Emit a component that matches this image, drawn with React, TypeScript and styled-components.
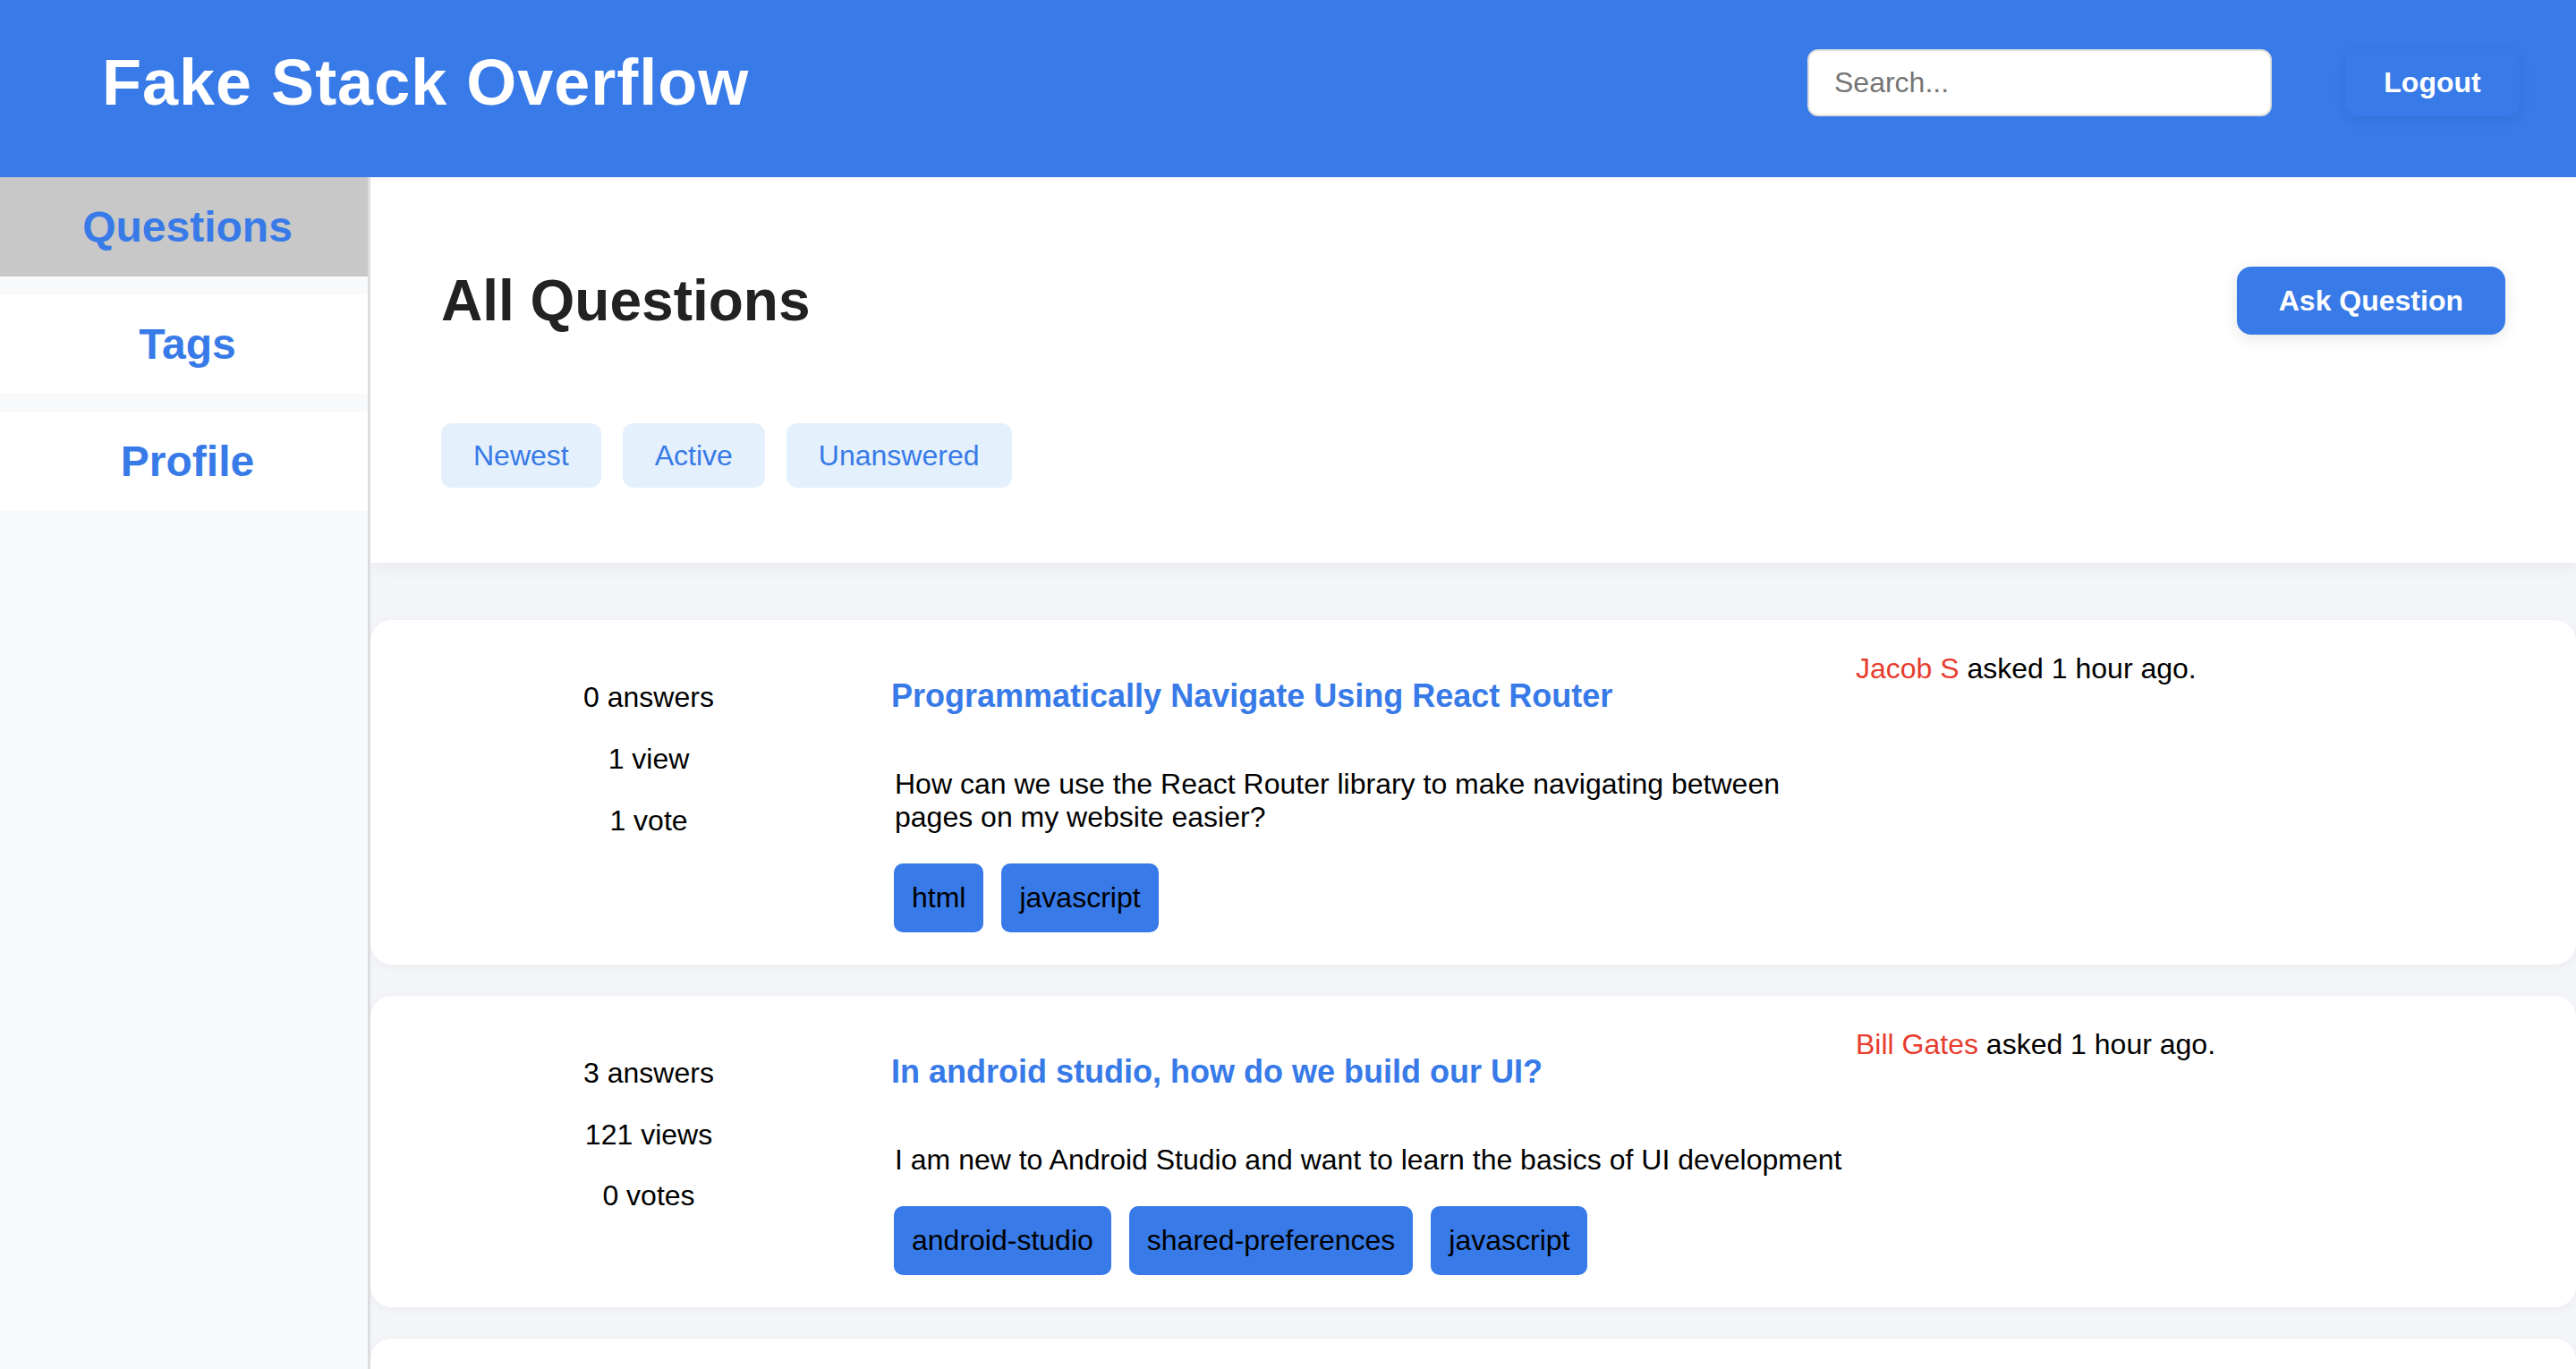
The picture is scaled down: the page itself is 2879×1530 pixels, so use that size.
import React from "react";
import styled, { createGlobalStyle } from "styled-components";

const BLUE = "#377ae8";

const GlobalStyle = createGlobalStyle`
  html, body {
    margin: 0;
    padding: 0;
    overflow: hidden;
    font-family: "Liberation Sans", Arial, sans-serif;
    background: #f4f5f9;
  }
  * { box-sizing: border-box; }
`;

const Page = styled.div`
  display: flex;
  flex-direction: column;
  height: 100vh;
`;

const TopBar = styled.header`
  display: flex;
  align-items: center;
  justify-content: space-between;
  height: 198px;
  flex-shrink: 0;
  padding: 0 63px 14px 114px;
  background: ${BLUE};
`;

const Brand = styled.h1`
  margin: 0;
  font-size: 72px;
  font-weight: 700;
  letter-spacing: 1px;
  color: #fff;
`;

const TopActions = styled.div`
  display: flex;
  align-items: center;
  gap: 82px;
`;

const SearchInput = styled.input`
  width: 519px;
  height: 75px;
  border: 2px solid #dedede;
  border-radius: 12px;
  padding: 0 28px;
  font-family: "Liberation Sans", Arial, sans-serif;
  font-size: 32px;
  color: #222;
  background: #fff;
  outline: none;
  &::placeholder {
    color: #757575;
  }
`;

const LogoutButton = styled.button`
  width: 195px;
  height: 76px;
  border: none;
  border-radius: 16px;
  background: ${BLUE};
  color: #fff;
  font-family: "Liberation Sans", Arial, sans-serif;
  font-size: 32px;
  font-weight: 700;
  box-shadow: 0 4px 14px rgba(0, 0, 0, 0.08);
  cursor: pointer;
`;

const Body = styled.div`
  display: flex;
  flex: 1;
  min-height: 0;
`;

const Sidebar = styled.nav`
  width: 414px;
  flex-shrink: 0;
  display: flex;
  flex-direction: column;
  gap: 20px;
  background: #f8f9fb;
  border-right: 3px solid #dcdde1;
`;

const NavItem = styled.a<{ $active?: boolean }>`
  display: flex;
  align-items: center;
  justify-content: center;
  height: 111px;
  padding-left: 8px;
  background: ${(p) => (p.$active ? "#c8c8c8" : "#ffffff")};
  color: ${BLUE};
  font-size: 48px;
  font-weight: 700;
  text-decoration: none;
  cursor: pointer;
`;

const Main = styled.main`
  flex: 1;
  min-width: 0;
  overflow: hidden;
  background: #f4f5f9;
`;

const ListHeader = styled.section`
  background: #fff;
  padding: 100px 79px 84px 79px;
  box-shadow: 0 6px 18px rgba(0, 0, 0, 0.05);
  position: relative;
  z-index: 1;
`;

const HeaderRow = styled.div`
  display: flex;
  align-items: center;
  justify-content: space-between;
  height: 76px;
`;

const PageTitle = styled.h2`
  margin: 0;
  font-size: 64px;
  font-weight: 700;
  color: #222;
`;

const AskButton = styled.button`
  height: 76px;
  padding: 0 47px;
  border: none;
  border-radius: 16px;
  background: ${BLUE};
  color: #fff;
  font-family: "Liberation Sans", Arial, sans-serif;
  font-size: 32px;
  font-weight: 700;
  box-shadow: 0 4px 18px rgba(0, 0, 0, 0.1);
  cursor: pointer;
`;

const FilterRow = styled.div`
  display: flex;
  gap: 24px;
  margin-top: 99px;
`;

const FilterButton = styled.button`
  height: 72px;
  padding: 0 36px;
  border: none;
  border-radius: 12px;
  background: #e4f0fb;
  color: ${BLUE};
  font-family: "Liberation Sans", Arial, sans-serif;
  font-size: 32px;
  cursor: pointer;
`;

const QuestionList = styled.div`
  display: flex;
  flex-direction: column;
  gap: 35px;
  padding-top: 64px;
`;

const Card = styled.article<{ $placeholder?: boolean }>`
  display: flex;
  align-items: flex-start;
  min-height: ${(p) => (p.$placeholder ? "349px" : "0")};
  padding: 36px;
  background: #fff;
  border-radius: 24px;
  box-shadow: 0 2px 12px rgba(0, 0, 0, 0.04);
`;

const Stats = styled.div`
  width: 550px;
  flex-shrink: 0;
  display: flex;
  flex-direction: column;
  align-items: center;
  gap: 32px;
  padding-top: 32px;
  font-size: 32px;
  color: #000;
`;

const Stat = styled.div`
  line-height: 36.8px;
`;

const Content = styled.div`
  width: 1074px;
  flex-shrink: 0;
  padding-top: 28px;
`;

const QuestionTitle = styled.h3`
  margin: 0 0 60px -4px;
  font-size: 36px;
  font-weight: 700;
  color: ${BLUE};
  line-height: 41.4px;
  cursor: pointer;
`;

const Description = styled.p`
  margin: 0 0 33px;
  font-size: 32px;
  line-height: 36.8px;
  color: #000;
`;

const Tags = styled.div`
  display: flex;
  gap: 20px;
  margin-left: -1px;
`;

const Tag = styled.span`
  padding: 20px;
  border-radius: 10px;
  background: ${BLUE};
  color: #000;
  font-size: 32px;
  line-height: 36.8px;
`;

const Meta = styled.div`
  font-size: 32px;
  line-height: 36.8px;
  color: #000;
`;

const Author = styled.span`
  color: #e73c2e;
`;

type Question = {
  answers: string;
  views: string;
  votes: string;
  title: string;
  text: string;
  tags: string[];
  author: string;
};

const questions: Question[] = [
  {
    answers: "0 answers",
    views: "1 view",
    votes: "1 vote",
    title: "Programmatically Navigate Using React Router",
    text: "How can we use the React Router library to make navigating between pages on my website easier?",
    tags: ["html", "javascript"],
    author: "Jacob S",
  },
  {
    answers: "3 answers",
    views: "121 views",
    votes: "0 votes",
    title: "In android studio, how do we build our UI?",
    text: "I am new to Android Studio and want to learn the basics of UI development",
    tags: ["android-studio", "shared-preferences", "javascript"],
    author: "Bill Gates",
  },
];

export default function App() {
  return (
    <>
      <GlobalStyle />
      <Page>
        <TopBar>
          <Brand>Fake Stack Overflow</Brand>
          <TopActions>
            <SearchInput placeholder="Search..." />
            <LogoutButton>Logout</LogoutButton>
          </TopActions>
        </TopBar>
        <Body>
          <Sidebar>
            <NavItem $active>Questions</NavItem>
            <NavItem>Tags</NavItem>
            <NavItem>Profile</NavItem>
          </Sidebar>
          <Main>
            <ListHeader>
              <HeaderRow>
                <PageTitle>All Questions</PageTitle>
                <AskButton>Ask Question</AskButton>
              </HeaderRow>
              <FilterRow>
                <FilterButton>Newest</FilterButton>
                <FilterButton>Active</FilterButton>
                <FilterButton>Unanswered</FilterButton>
              </FilterRow>
            </ListHeader>
            <QuestionList>
              {questions.map((q) => (
                <Card key={q.title}>
                  <Stats>
                    <Stat>{q.answers}</Stat>
                    <Stat>{q.views}</Stat>
                    <Stat>{q.votes}</Stat>
                  </Stats>
                  <Content>
                    <QuestionTitle>{q.title}</QuestionTitle>
                    <Description>{q.text}</Description>
                    <Tags>
                      {q.tags.map((t) => (
                        <Tag key={t}>{t}</Tag>
                      ))}
                    </Tags>
                  </Content>
                  <Meta>
                    <Author>{q.author}</Author> asked 1 hour ago.
                  </Meta>
                </Card>
              ))}
              <Card $placeholder aria-hidden="true" />
            </QuestionList>
          </Main>
        </Body>
      </Page>
    </>
  );
}
